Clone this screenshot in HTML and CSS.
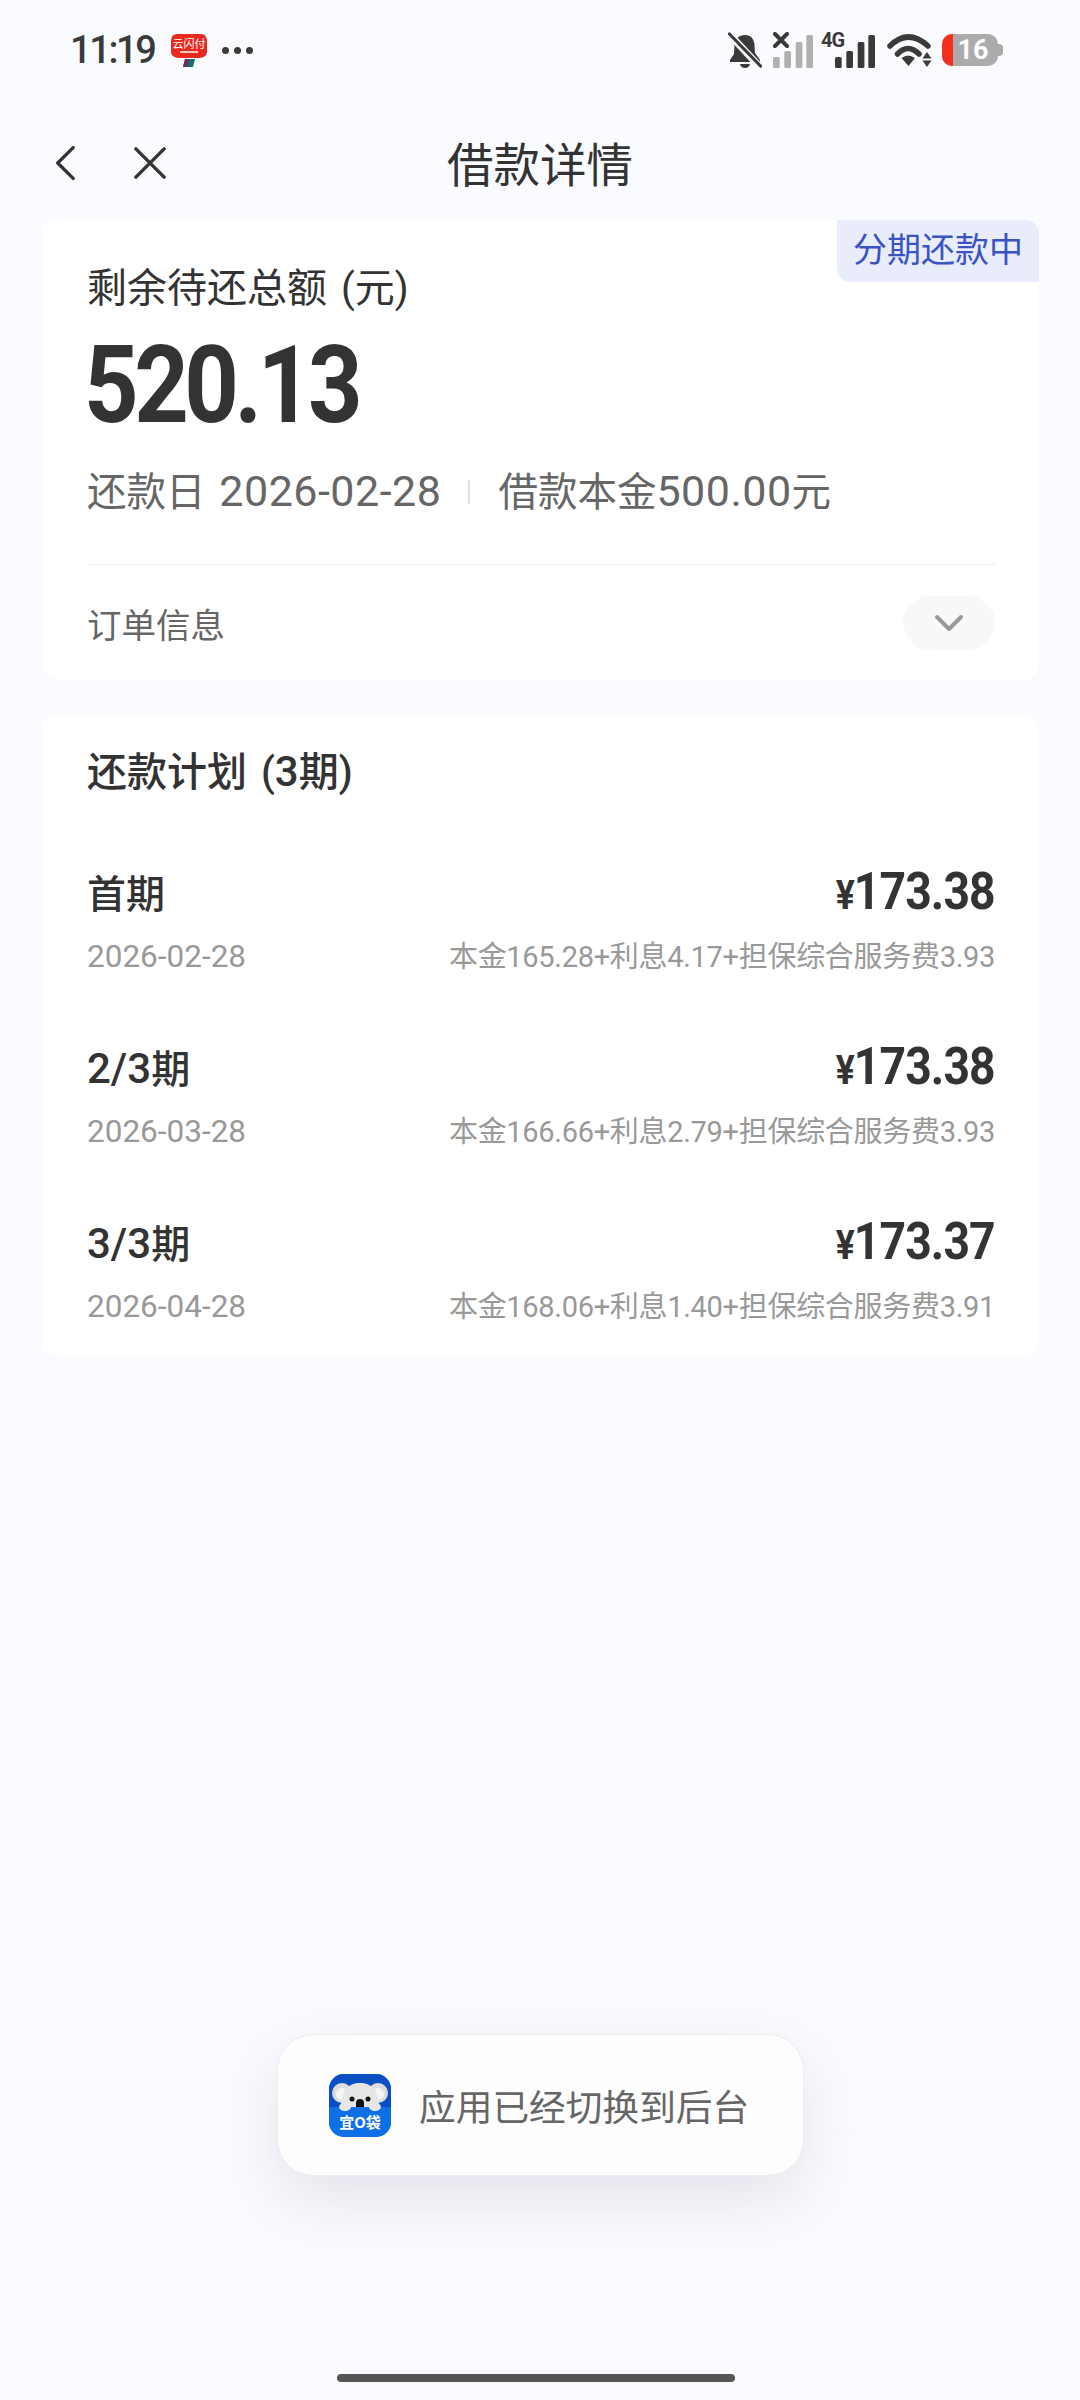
FILE: index.html
```html
<!DOCTYPE html>
<html lang="zh-CN">
<head>
<meta charset="utf-8">
<title>借款详情</title>
<link rel="stylesheet" href="styles.css">
</head>
<body>
<div class="page">
  <header class="status">
    <div class="status-left">
      <span class="time">11:19</span>
      <svg class="app-notif" viewBox="0 0 36 33">
        <path d="M6 0h24q5 0 6 6v12q0 5-7 6H7q-7-1-7-6V6q1-6 6-6z" fill="#e8291f"/>
        <path d="M14 25h10l-2 8H12z" fill="#1c6a72"/>
        <path d="M14 25h4l-2 8h-4z" fill="#6a2a5a"/>
        <text x="18" y="13.500" class="app-notif-text">云闪付</text>
        <rect x="9" y="17" width="18" height="2" fill="#f8c8c0"/>
      </svg>
      <span class="more"><i></i><i></i><i></i></span>
    </div>
    <div class="status-right">
      <svg class="ic-bell" viewBox="0 0 34 37">
        <path d="M17 3c6 0 9 4 9.500 10l.5 8 5 7v2H2v-2l4-6 .5-10C7 7 11 3 17 3z" fill="#3a3a3a"/>
        <path d="M12 32h10q-1 4-5 4t-5-4z" fill="#3a3a3a"/>
        <path d="M3 4l28 30" stroke="#fafbff" stroke-width="7"/>
        <path d="M1.500 2l31 32" stroke="#3a3a3a" stroke-width="3.200" stroke-linecap="round"/>
      </svg>
      <svg class="ic-sig" viewBox="0 0 40 36">
        <path d="M2 2l12 12M14 2L2 14" stroke="#3a3a3a" stroke-width="4" stroke-linecap="round"/>
        <rect x="0" y="25" width="6.700" height="11" rx="1.500" fill="#b0b0b0"/>
        <rect x="11.300" y="19" width="6.700" height="17" rx="1.500" fill="#b0b0b0"/>
        <rect x="22.700" y="10" width="6.700" height="26" rx="1.500" fill="#b0b0b0"/>
        <rect x="33.300" y="3" width="6.700" height="33" rx="1.500" fill="#b0b0b0"/>
      </svg>
      <svg class="ic-4g" viewBox="0 -8 54 44">
        <text x="0" y="15" class="ic-4g-text">4G</text>
        <rect x="14" y="25" width="6.700" height="11" rx="1.500" fill="#3a3a3a"/>
        <rect x="25.300" y="19" width="6.700" height="17" rx="1.500" fill="#3a3a3a"/>
        <rect x="36.700" y="10" width="6.700" height="26" rx="1.500" fill="#3a3a3a"/>
        <rect x="47.300" y="3" width="6.700" height="33" rx="1.500" fill="#3a3a3a"/>
      </svg>
      <svg class="ic-wifi" viewBox="0 0 45 33">
        <path d="M3 12Q21-6 41 12" stroke="#3a3a3a" stroke-width="5.500" fill="none" stroke-linecap="round"/>
        <path d="M10.500 20Q21 9 32 20" stroke="#3a3a3a" stroke-width="5.500" fill="none" stroke-linecap="round"/>
        <path d="M14.500 24Q21 19 28 24l-6.500 8z" fill="#3a3a3a"/>
        <path d="M40 18l4.500 6.500h-9zM40 33l4.500-6.500h-9z" fill="#3a3a3a"/>
      </svg>
      <div class="battery">
        <span class="battery-level"></span>
        <span class="battery-num">16</span>
        <span class="battery-cap"></span>
      </div>
    </div>
  </header>

  <nav class="nav">
    <div class="nav-icons">
      <svg class="ic-back" viewBox="0 0 22 38"><path d="M20 2L3 19l17 17" fill="none" stroke="#333" stroke-width="3.600" stroke-linecap="round" stroke-linejoin="round"/></svg>
      <svg class="ic-close" viewBox="0 0 34 34"><path d="M2 2l30 30M32 2L2 32" fill="none" stroke="#333" stroke-width="3.600" stroke-linecap="round"/></svg>
    </div>
    <h1 class="nav-title">借款详情</h1>
  </nav>

  <main class="content">
    <section class="card card-summary">
      <span class="badge">分期还款中</span>
      <div class="remain-label">剩余待还总额<span class="paren">(元)</span></div>
      <div class="remain-value">520.13</div>
      <div class="remain-meta">
        <span>还款日 <span class="num num-date">2026-02-28</span></span>
        <i class="meta-sep"></i>
        <span>借款本金<span class="num">500.00</span>元</span>
      </div>
      <div class="order-row">
        <span class="order-label">订单信息</span>
        <span class="order-toggle">
          <svg class="ic-down" viewBox="0 0 30 20"><path d="M3 4l12 12L27 4" fill="none" stroke="#999" stroke-width="4" stroke-linecap="round" stroke-linejoin="round"/></svg>
        </span>
      </div>
    </section>

    <section class="card card-plan">
      <h2 class="plan-title">还款计划<span class="paren">(<span class="plan-num">3</span>期)</span></h2>
      <div class="plan-row">
        <div class="plan-top"><span class="plan-name">首期</span><span class="plan-amt"><span class="yen">¥</span>173.38</span></div>
        <div class="plan-bottom"><span class="plan-date">2026-02-28</span><span class="plan-detail">本金165.28+利息4.17+担保综合服务费3.93</span></div>
      </div>
      <div class="plan-row">
        <div class="plan-top"><span class="plan-name"><span class="plan-num">2/3</span>期</span><span class="plan-amt"><span class="yen">¥</span>173.38</span></div>
        <div class="plan-bottom"><span class="plan-date">2026-03-28</span><span class="plan-detail">本金166.66+利息2.79+担保综合服务费3.93</span></div>
      </div>
      <div class="plan-row">
        <div class="plan-top"><span class="plan-name"><span class="plan-num">3/3</span>期</span><span class="plan-amt"><span class="yen">¥</span>173.37</span></div>
        <div class="plan-bottom"><span class="plan-date">2026-04-28</span><span class="plan-detail">本金168.06+利息1.40+担保综合服务费3.91</span></div>
      </div>
    </section>
  </main>

  <div class="toast">
    <svg class="toast-icon" viewBox="0 0 62 63">
      <defs><clipPath id="squircle"><rect width="62" height="63" rx="15"/></clipPath></defs>
      <g clip-path="url(#squircle)">
        <rect width="62" height="63" fill="#0f6fe6"/>
        <rect width="62" height="33" fill="#0a4fc4"/>
        <circle cx="13" cy="19" r="10" fill="#dcdcdc"/>
        <circle cx="49" cy="19" r="10" fill="#dcdcdc"/>
        <circle cx="13" cy="20" r="6" fill="#f4f4f4"/>
        <circle cx="49" cy="20" r="6" fill="#f4f4f4"/>
        <path d="M12 33C12 16 20 9 31 9s19 7 19 24z" fill="#e6e6e6"/>
        <rect y="33" width="62" height="30" fill="#0f6fe6"/>
        <ellipse cx="16" cy="33" rx="6" ry="4" fill="#e6e6e6"/>
        <ellipse cx="46" cy="33" rx="6" ry="4" fill="#e6e6e6"/>
        <circle cx="23" cy="25" r="2.500" fill="#111"/>
        <circle cx="39" cy="25" r="2.500" fill="#111"/>
        <path d="M27 33v-4q0-4 4-4t4 4v4z" fill="#111"/>
        <text x="31" y="54" class="toast-icon-text">宜O袋</text>
      </g>
    </svg>
    <span class="toast-text">应用已经切换到后台</span>
  </div>
  <div class="home-bar"></div>
</div>
</body>
</html>
```
FILE: styles.css
```css
* { box-sizing: border-box; }
html, body { margin: 0; padding: 0; }
body {
  background: #fafbff;
  font-family: Roboto, "Noto Sans CJK SC", sans-serif;
  color: #333;
}
.page { position: relative; width: 1080px; height: 2400px; overflow: hidden; display: flex; flex-direction: column; }

/* status bar */
.status { height: 100px; display: flex; justify-content: space-between; align-items: center; padding: 0 77px 0 70px; flex: none; }
.status-left { display: flex; align-items: center; }
.time { font-size: 38px; font-weight: 500; color: #3a3a3a; letter-spacing: -2.400px; width: 101px; }
.app-notif { width: 36px; height: 33px; }
.app-notif-text { font-family: "Noto Sans CJK SC", sans-serif; font-size: 11px; fill: #fff; text-anchor: middle; }
.more { display: flex; gap: 5px; margin-left: 15px; }
.more i { width: 7px; height: 7px; border-radius: 50%; background: #3a3a3a; }
.status-right { display: flex; align-items: center; }
.ic-bell { width: 34px; height: 37px; margin-right: 11px; }
.ic-sig { width: 40px; height: 36px; margin-right: 8px; }
.ic-4g { width: 54px; height: 44px; margin: -8px 12px 0 0; }
.ic-4g-text { font-family: Roboto, sans-serif; font-weight: 700; font-size: 20px; letter-spacing: -1px; fill: #3a3a3a; }
.ic-wifi { width: 45px; height: 33px; margin-right: 10px; }
.battery { position: relative; width: 56px; height: 32px; border-radius: 10px; background: #ababab; display: flex; align-items: center; justify-content: center; overflow: visible; margin-right: 5px; }
.battery-level { position: absolute; left: 0; top: 0; bottom: 0; width: 11px; background: #f5301f; border-radius: 10px 0 0 10px; }
.battery-num { color: #fff; font-weight: 700; font-size: 27px; margin-left: 6px; }
.battery-cap { position: absolute; right: -5px; top: 10px; width: 5px; height: 12px; background: #ababab; border-radius: 0 4px 4px 0; }

/* nav */
.nav { position: relative; height: 120px; flex: none; display: flex; align-items: center; justify-content: center; padding-top: 2px; }
.nav-icons { position: absolute; left: 55px; top: 45px; display: flex; align-items: center; gap: 59px; }
.ic-back { width: 20px; height: 36px; }
.ic-close { width: 32px; height: 32px; }
.nav-title { margin: 0; font-size: 46.500px; font-weight: 400; color: #333; font-family: "Noto Sans CJK SC", sans-serif; }

/* cards */
.content { padding: 0 41px 0 42px; display: flex; flex-direction: column; gap: 35px; }
.card { position: relative; background: #fff; border-radius: 16px; padding: 0 44px 0 45px; }
.card-summary { height: 460px; padding-top: 44px; }
.badge { position: absolute; right: 0; top: 0; height: 62px; width: 202px; display: flex; align-items: center; justify-content: center; padding-bottom: 7px; background: #e9ecfb; color: #3a53c5; font-size: 34px; border-radius: 0 14px 0 14px; }
.remain-label { font-size: 40px; line-height: 50px; color: #333; }
.paren { margin-left: 14px; }
.remain-value { font-size: 107px; line-height: 110px; font-weight: 700; color: #333; margin: 17px 0 0 -3px; letter-spacing: -5px; transform: scaleX(.89); transform-origin: left center; }
.remain-meta { display: flex; align-items: center; font-size: 39.500px; line-height: 50px; color: #666; margin-top: 25px; }
.num { font-size: 43px; letter-spacing: .5px; }
.num-date { margin-left: 4px; }
.meta-sep { width: 2px; height: 24px; background: #ddd; margin: 0 28px 0 27px; }
.order-row { margin-top: 46px; border-top: 1px solid #eee; height: 88px; display: flex; align-items: center; justify-content: space-between; padding-top: 28px; }
.order-label { font-size: 34.500px; color: #666; }
.order-toggle { width: 92px; height: 54px; border-radius: 27px; background: #f8f8f8; display: flex; align-items: center; justify-content: center; }
.ic-down { width: 30px; height: 20px; }

.card-plan { height: 641px; padding-top: 32px; }
.plan-title { margin: 0; font-size: 40px; line-height: 50px; font-weight: 500; color: #333; }
.plan-row { margin-bottom: 59px; }
.plan-top { display: flex; justify-content: space-between; align-items: center; height: 60px; }
.plan-name { font-size: 39px; font-weight: 500; color: #333; }
.plan-num { font-size: 42px; }
.plan-amt { font-size: 52px; font-weight: 700; color: #333; letter-spacing: -1px; transform: scaleX(.89); transform-origin: right center; }
.yen { font-size: 40px; }
.plan-bottom { display: flex; justify-content: space-between; align-items: center; line-height: 40px; color: #999; margin-top: 16px; }
.plan-date { font-size: 31.500px; }
.plan-detail { font-size: 29px; letter-spacing: -.3px; }
.plan-title + .plan-row { margin-top: 63px; }

/* toast */
.toast { position: absolute; left: 277px; top: 2034px; width: 527px; height: 142px; background: #fdfdfd; border: 1px solid #ececec; border-radius: 36px; box-shadow: 0 24px 60px rgba(30, 40, 70, .1); display: flex; align-items: center; padding-left: 51px; gap: 28px; }
.toast-icon { width: 62px; height: 63px; flex: none; }
.toast-icon-text { font-family: "Noto Sans CJK SC", sans-serif; font-size: 15px; font-weight: 700; fill: #fff; text-anchor: middle; }
.toast-text { font-size: 36.700px; color: #666; font-family: "Noto Sans CJK SC", sans-serif; }

.home-bar { position: absolute; left: 337px; top: 2374px; width: 398px; height: 8px; border-radius: 4px; background: #555; }
```
